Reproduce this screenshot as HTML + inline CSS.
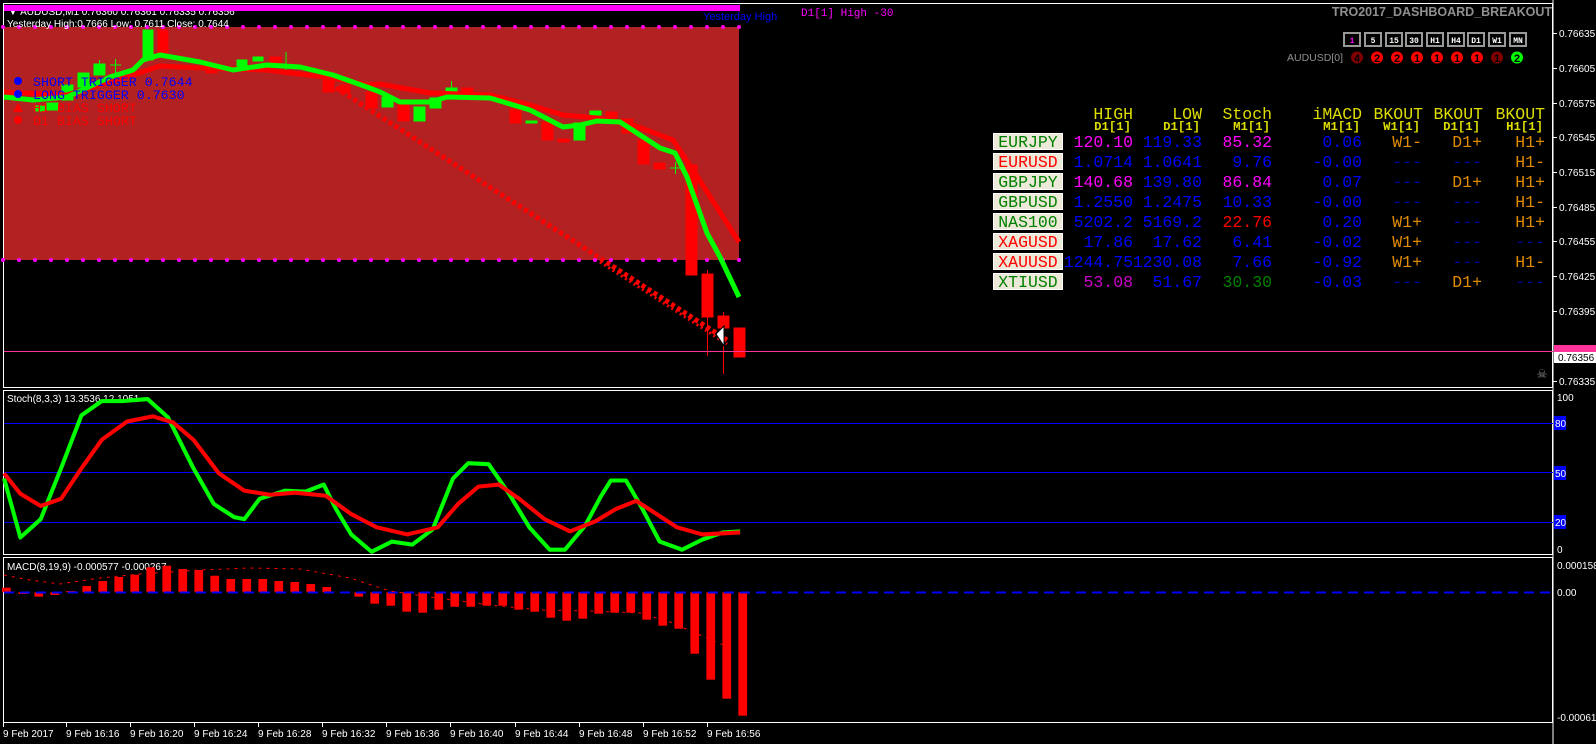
<!DOCTYPE html>
<html><head><meta charset="utf-8"><style>
html,body{margin:0;padding:0;background:#000;width:1596px;height:744px;overflow:hidden}
svg{display:block}
.ax{font:10px "Liberation Sans",sans-serif;fill:#fff}
.mono{font-family:"Liberation Mono",monospace}
</style></head><body>
<svg width="1596" height="744" viewBox="0 0 1596 744" xmlns="http://www.w3.org/2000/svg">
<rect width="1596" height="744" fill="#000"/>
<rect x="3.5" y="3.5" width="1549" height="384" fill="none" stroke="#fff"/>
<rect x="3.5" y="390.5" width="1549" height="164" fill="none" stroke="#fff"/>
<rect x="3.5" y="557.5" width="1549" height="165" fill="none" stroke="#fff"/>
<line x1="1553" y1="0" x2="1553" y2="744" stroke="#fff"/>

<rect x="4" y="27" width="735" height="233" fill="#b22222"/>
<g fill="#ff00ff">
<circle cx="3" cy="27" r="2"/><circle cx="19" cy="27" r="2"/><circle cx="35" cy="27" r="2"/><circle cx="51" cy="27" r="2"/><circle cx="67" cy="27" r="2"/><circle cx="83" cy="27" r="2"/><circle cx="99" cy="27" r="2"/><circle cx="115" cy="27" r="2"/><circle cx="131" cy="27" r="2"/><circle cx="147" cy="27" r="2"/><circle cx="163" cy="27" r="2"/><circle cx="179" cy="27" r="2"/><circle cx="195" cy="27" r="2"/><circle cx="211" cy="27" r="2"/><circle cx="227" cy="27" r="2"/><circle cx="243" cy="27" r="2"/><circle cx="259" cy="27" r="2"/><circle cx="275" cy="27" r="2"/><circle cx="291" cy="27" r="2"/><circle cx="307" cy="27" r="2"/><circle cx="323" cy="27" r="2"/><circle cx="339" cy="27" r="2"/><circle cx="355" cy="27" r="2"/><circle cx="371" cy="27" r="2"/><circle cx="387" cy="27" r="2"/><circle cx="403" cy="27" r="2"/><circle cx="419" cy="27" r="2"/><circle cx="435" cy="27" r="2"/><circle cx="451" cy="27" r="2"/><circle cx="467" cy="27" r="2"/><circle cx="483" cy="27" r="2"/><circle cx="499" cy="27" r="2"/><circle cx="515" cy="27" r="2"/><circle cx="531" cy="27" r="2"/><circle cx="547" cy="27" r="2"/><circle cx="563" cy="27" r="2"/><circle cx="579" cy="27" r="2"/><circle cx="595" cy="27" r="2"/><circle cx="611" cy="27" r="2"/><circle cx="627" cy="27" r="2"/><circle cx="643" cy="27" r="2"/><circle cx="659" cy="27" r="2"/><circle cx="675" cy="27" r="2"/><circle cx="691" cy="27" r="2"/><circle cx="707" cy="27" r="2"/><circle cx="723" cy="27" r="2"/><circle cx="739" cy="27" r="2"/>
<circle cx="3" cy="260" r="2"/><circle cx="19" cy="260" r="2"/><circle cx="35" cy="260" r="2"/><circle cx="51" cy="260" r="2"/><circle cx="67" cy="260" r="2"/><circle cx="83" cy="260" r="2"/><circle cx="99" cy="260" r="2"/><circle cx="115" cy="260" r="2"/><circle cx="131" cy="260" r="2"/><circle cx="147" cy="260" r="2"/><circle cx="163" cy="260" r="2"/><circle cx="179" cy="260" r="2"/><circle cx="195" cy="260" r="2"/><circle cx="211" cy="260" r="2"/><circle cx="227" cy="260" r="2"/><circle cx="243" cy="260" r="2"/><circle cx="259" cy="260" r="2"/><circle cx="275" cy="260" r="2"/><circle cx="291" cy="260" r="2"/><circle cx="307" cy="260" r="2"/><circle cx="323" cy="260" r="2"/><circle cx="339" cy="260" r="2"/><circle cx="355" cy="260" r="2"/><circle cx="371" cy="260" r="2"/><circle cx="387" cy="260" r="2"/><circle cx="403" cy="260" r="2"/><circle cx="419" cy="260" r="2"/><circle cx="435" cy="260" r="2"/><circle cx="451" cy="260" r="2"/><circle cx="467" cy="260" r="2"/><circle cx="483" cy="260" r="2"/><circle cx="499" cy="260" r="2"/><circle cx="515" cy="260" r="2"/><circle cx="531" cy="260" r="2"/><circle cx="547" cy="260" r="2"/><circle cx="563" cy="260" r="2"/><circle cx="579" cy="260" r="2"/><circle cx="595" cy="260" r="2"/><circle cx="611" cy="260" r="2"/><circle cx="627" cy="260" r="2"/><circle cx="643" cy="260" r="2"/><circle cx="659" cy="260" r="2"/><circle cx="675" cy="260" r="2"/><circle cx="691" cy="260" r="2"/><circle cx="707" cy="260" r="2"/><circle cx="723" cy="260" r="2"/><circle cx="739" cy="260" r="2"/>
</g>

<line x1="330" y1="84" x2="727" y2="340" stroke="#ff0000" stroke-width="5" stroke-dasharray="4 3"/>
<line x1="600" y1="262" x2="727" y2="344" stroke="#ff0000" stroke-width="3" stroke-dasharray="2 3"/>

<g fill="#ff0000" stroke="#ff0000">
<rect x="158" y="30" width="10" height="25"/>
<rect x="206" y="65" width="11" height="8"/>
<rect x="270" y="57" width="11" height="6"/>
<rect x="323" y="80" width="11" height="12"/>
<rect x="340" y="85" width="10" height="8"/>
<rect x="366" y="92" width="11" height="16"/>
<rect x="398" y="105" width="11" height="16"/>
<rect x="462" y="88" width="11" height="7"/>
<rect x="510" y="109" width="11" height="14"/>
<rect x="542" y="122" width="11" height="18"/>
<rect x="558" y="139" width="11" height="3"/>
<rect x="606" y="112" width="11" height="6"/>
<rect x="622" y="119" width="11" height="14"/>
<rect x="638" y="140" width="11" height="24"/>
<rect x="654" y="163" width="11" height="6"/>
<rect x="686" y="165" width="11" height="110"/>
<rect x="702" y="274" width="11" height="43"/><line x1="707.5" y1="270" x2="707.5" y2="356"/>
<rect x="718" y="316" width="11" height="12"/><line x1="723.5" y1="312" x2="723.5" y2="374"/>
<rect x="734" y="328" width="11" height="29"/>
</g>
<g fill="#00ff00" stroke="#00ff00">
<rect x="143" y="30" width="10" height="30"/>
<rect x="94" y="64" width="11" height="11"/><line x1="99.5" y1="60" x2="99.5" y2="64"/>
<rect x="78" y="73" width="11" height="14"/>
<rect x="62" y="85" width="11" height="15"/>
<rect x="47" y="103" width="11" height="7"/>
<rect x="35" y="106" width="10" height="5"/>
<line x1="110" y1="65" x2="121" y2="65"/><line x1="115.5" y1="59" x2="115.5" y2="73"/>
<rect x="237" y="60" width="10" height="8"/>
<rect x="253" y="57" width="10" height="4"/>
<line x1="286" y1="52" x2="286" y2="70"/>
<rect x="382" y="97" width="11" height="10"/>
<rect x="414" y="107" width="11" height="14"/>
<rect x="430" y="98" width="11" height="10"/>
<rect x="446" y="88" width="11" height="3"/><line x1="451.5" y1="81" x2="451.5" y2="88"/>
<rect x="526" y="121" width="11" height="2"/>
<rect x="574" y="123" width="11" height="17"/>
<rect x="590" y="111" width="11" height="4"/>
<line x1="670" y1="168" x2="681" y2="168"/><line x1="675.5" y1="162" x2="675.5" y2="174"/>
</g>

<polyline fill="none" stroke="#ff0000" stroke-width="5" stroke-linejoin="round" points="4,92 67,95 133,75 160,66 200,68 267,70 333,78 367,85 380,84 430,93 490,95 530,105 563,115 597,118 633,125 673,140 693,170 739,242"/>
<polyline fill="none" stroke="#00ff00" stroke-width="5" stroke-linejoin="round" points="4,97 33,100 67,97 110,77 133,70 143,60 160,55 200,62 233,70 267,65 300,67 333,75 367,87 380,92 400,102 430,102 447,97 490,98 530,110 563,127 580,125 597,121 620,122 640,135 660,148 675,153 687,177 707,233 720,257 739,297"/>

<path d="M716 334 L724 326 L724 346 Z" fill="#fff" stroke="#000" stroke-width="1"/>

<text x="8" y="15" class="ax" font-size="10.5">▼  AUDUSD,M1  0.76360 0.76361 0.76335 0.76356</text>
<rect x="4" y="5" width="736" height="6" fill="#ff00ff"/>
<text x="7" y="27" class="ax" font-size="10.5">Yesterday High:0.7666    Low: 0.7611    Close: 0.7644</text>
<text x="703" y="20" font-family="Liberation Sans,sans-serif" font-size="11" fill="#0000ff">Yesterday High</text>
<text x="801" y="16" class="mono" font-size="11" fill="#ff00ff">D1[1] High  -30</text>
<text x="1552" y="16" text-anchor="end" font-family="Liberation Sans,sans-serif" font-size="12.5" font-weight="bold" fill="#909090">TRO2017_DASHBOARD_BREAKOUT</text>

<g class="mono" font-size="13.3">
<circle cx="18" cy="81" r="4" fill="#0000ff"/><text x="33" y="86" fill="#0000ff">SHORT TRIGGER 0.7644</text>
<circle cx="18" cy="94" r="4" fill="#0000ff"/><text x="33" y="99" fill="#0000ff">LONG TRIGGER  0.7630</text>
<path d="M13 112 L18 103 L23 112Z" fill="#ff0000"/><text x="33" y="112" fill="#ff0000">H1 BIAS SHORT</text>
<circle cx="18" cy="120" r="4" fill="#ff0000"/><text x="33" y="125" fill="#ff0000">D1 BIAS SHORT</text>
</g>

<line x1="4" y1="351.5" x2="1553" y2="351.5" stroke="#ff3399"/>
<rect x="1554" y="345" width="42" height="7" fill="#ff3399"/>
<rect x="1554" y="352" width="42" height="11" fill="#fff"/>
<text x="1558" y="361" class="ax" style="fill:#000">0.76356</text>
<text x="1542" y="378" text-anchor="middle" font-size="12" fill="#888">☠</text>

<g class="ax">
<text x="1559" y="37">0.76635</text><text x="1559" y="72">0.76605</text><text x="1559" y="107">0.76575</text><text x="1559" y="141">0.76545</text><text x="1559" y="176">0.76515</text><text x="1559" y="211">0.76485</text><text x="1559" y="245">0.76455</text><text x="1559" y="280">0.76425</text><text x="1559" y="315">0.76395</text><text x="1559" y="385">0.76335</text>
</g>
<g stroke="#fff"><line x1="1553" y1="33.5" x2="1557" y2="33.5"/><line x1="1553" y1="68.5" x2="1557" y2="68.5"/><line x1="1553" y1="103.5" x2="1557" y2="103.5"/><line x1="1553" y1="137.5" x2="1557" y2="137.5"/><line x1="1553" y1="172.5" x2="1557" y2="172.5"/><line x1="1553" y1="207.5" x2="1557" y2="207.5"/><line x1="1553" y1="241.5" x2="1557" y2="241.5"/><line x1="1553" y1="276.5" x2="1557" y2="276.5"/><line x1="1553" y1="311.5" x2="1557" y2="311.5"/><line x1="1553" y1="381.5" x2="1557" y2="381.5"/></g>

<g font-family="Liberation Mono,monospace" font-size="8" font-weight="bold" text-anchor="middle">
<g fill="#000" stroke="#999" stroke-width="2">
<rect x="1344" y="33" width="16" height="13"/><rect x="1365" y="33" width="16" height="13"/><rect x="1386" y="33" width="16" height="13"/><rect x="1406" y="33" width="16" height="13"/><rect x="1427" y="33" width="16" height="13"/><rect x="1448" y="33" width="16" height="13"/><rect x="1468" y="33" width="16" height="13"/><rect x="1489" y="33" width="16" height="13"/><rect x="1510" y="33" width="16" height="13"/>
</g>
<text x="1352" y="43" fill="#ff00ff">1</text><text x="1373" y="43" fill="#fff">5</text><text x="1394" y="43" fill="#fff">15</text><text x="1414" y="43" fill="#fff">30</text><text x="1435" y="43" fill="#fff">H1</text><text x="1456" y="43" fill="#fff">H4</text><text x="1476" y="43" fill="#fff">D1</text><text x="1497" y="43" fill="#fff">W1</text><text x="1518" y="43" fill="#fff">MN</text>
</g>
<text x="1343" y="61" text-anchor="end" font-family="Liberation Sans,sans-serif" font-size="10.5" fill="#909090">AUDUSD[0]</text>
<g font-family="Liberation Sans,sans-serif" font-size="11" font-weight="bold" text-anchor="middle">
<circle cx="1357" cy="57.5" r="6" fill="#800000"/><text x="1357" y="62" fill="#000">4</text>
<circle cx="1377" cy="57.5" r="6" fill="#ff0000"/><text x="1377" y="62" fill="#000">2</text>
<circle cx="1397" cy="57.5" r="6" fill="#ff0000"/><text x="1397" y="62" fill="#000">2</text>
<circle cx="1417" cy="57.5" r="6" fill="#ff0000"/><text x="1417" y="62" fill="#000">1</text>
<circle cx="1437" cy="57.5" r="6" fill="#ff0000"/><text x="1437" y="62" fill="#000">1</text>
<circle cx="1457" cy="57.5" r="6" fill="#ff0000"/><text x="1457" y="62" fill="#000">1</text>
<circle cx="1477" cy="57.5" r="6" fill="#ff0000"/><text x="1477" y="62" fill="#000">1</text>
<circle cx="1497" cy="57.5" r="6" fill="#800000"/><text x="1497" y="62" fill="#000">1</text>
<circle cx="1517" cy="57.5" r="6" fill="#00ff00"/><text x="1517" y="62" fill="#000">2</text>
</g>

<!-- dashboard -->
<g font-family="Liberation Mono,monospace" text-anchor="end">
<g font-size="16.5" fill="#dede00">
<text x="1133" y="119">HIGH</text><text x="1202" y="119">LOW</text><text x="1272" y="119">Stoch</text><text x="1362" y="119">iMACD</text><text x="1423" y="119">BKOUT</text><text x="1483" y="119">BKOUT</text><text x="1545" y="119">BKOUT</text>
</g>
<g font-size="12.3" fill="#dede00" font-weight="bold">
<text x="1131" y="130">D1[1]</text><text x="1200" y="130">D1[1]</text><text x="1270" y="130">M1[1]</text><text x="1360" y="130">M1[1]</text><text x="1420" y="130">W1[1]</text><text x="1480" y="130">D1[1]</text><text x="1543" y="130">H1[1]</text>
</g>
<g fill="#ece9d8" stroke="#fff" stroke-width="1">
<rect x="993.5" y="133.5" width="69" height="16"/><rect x="993.5" y="153.5" width="69" height="16"/><rect x="993.5" y="173.5" width="69" height="16"/><rect x="993.5" y="193.5" width="69" height="16"/><rect x="993.5" y="213.5" width="69" height="16"/><rect x="993.5" y="233.5" width="69" height="16"/><rect x="993.5" y="253.5" width="69" height="16"/><rect x="993.5" y="273.5" width="69" height="16"/>
</g>
<g font-size="16.5" text-anchor="middle">
<text x="1028" y="147" fill="#008000">EURJPY</text><text x="1028" y="167" fill="#ff0000">EURUSD</text><text x="1028" y="187" fill="#008000">GBPJPY</text><text x="1028" y="207" fill="#008000">GBPUSD</text><text x="1028" y="227" fill="#008000">NAS100</text><text x="1028" y="247" fill="#ff0000">XAGUSD</text><text x="1028" y="267" fill="#ff0000">XAUUSD</text><text x="1028" y="287" fill="#008000">XTIUSD</text>
</g>
<g font-size="16.5">
<text x="1133" y="147" fill="#ff00ff">120.10</text><text x="1202" y="147" fill="#0000ff">119.33</text><text x="1272" y="147" fill="#ff00ff">85.32</text><text x="1362" y="147" fill="#0000ff">0.06</text><text x="1422" y="147" fill="#e08a00">W1-</text><text x="1482" y="147" fill="#e08a00">D1+</text><text x="1545" y="147" fill="#e08a00">H1+</text>
<text x="1133" y="167" fill="#0000ff">1.0714</text><text x="1202" y="167" fill="#0000ff">1.0641</text><text x="1272" y="167" fill="#0000ff">9.76</text><text x="1362" y="167" fill="#0000ff">-0.00</text><text x="1422" y="167" fill="#0000a0">---</text><text x="1482" y="167" fill="#0000a0">---</text><text x="1545" y="167" fill="#e08a00">H1-</text>
<text x="1133" y="187" fill="#ff00ff">140.68</text><text x="1202" y="187" fill="#0000ff">139.80</text><text x="1272" y="187" fill="#ff00ff">86.84</text><text x="1362" y="187" fill="#0000ff">0.07</text><text x="1422" y="187" fill="#0000a0">---</text><text x="1482" y="187" fill="#e08a00">D1+</text><text x="1545" y="187" fill="#e08a00">H1+</text>
<text x="1133" y="207" fill="#0000ff">1.2550</text><text x="1202" y="207" fill="#0000ff">1.2475</text><text x="1272" y="207" fill="#0000ff">10.33</text><text x="1362" y="207" fill="#0000ff">-0.00</text><text x="1422" y="207" fill="#0000a0">---</text><text x="1482" y="207" fill="#0000a0">---</text><text x="1545" y="207" fill="#e08a00">H1-</text>
<text x="1133" y="227" fill="#0000ff">5202.2</text><text x="1202" y="227" fill="#0000ff">5169.2</text><text x="1272" y="227" fill="#ff0000">22.76</text><text x="1362" y="227" fill="#0000ff">0.20</text><text x="1422" y="227" fill="#e08a00">W1+</text><text x="1482" y="227" fill="#0000a0">---</text><text x="1545" y="227" fill="#e08a00">H1+</text>
<text x="1133" y="247" fill="#0000ff">17.86</text><text x="1202" y="247" fill="#0000ff">17.62</text><text x="1272" y="247" fill="#0000ff">6.41</text><text x="1362" y="247" fill="#0000ff">-0.02</text><text x="1422" y="247" fill="#e08a00">W1+</text><text x="1482" y="247" fill="#0000a0">---</text><text x="1545" y="247" fill="#0000a0">---</text>
<text x="1133" y="267" fill="#0000ff">1244.75</text><text x="1202" y="267" fill="#0000ff">1230.08</text><text x="1272" y="267" fill="#0000ff">7.66</text><text x="1362" y="267" fill="#0000ff">-0.92</text><text x="1422" y="267" fill="#e08a00">W1+</text><text x="1482" y="267" fill="#0000a0">---</text><text x="1545" y="267" fill="#e08a00">H1-</text>
<text x="1133" y="287" fill="#cc00cc">53.08</text><text x="1202" y="287" fill="#0000ff">51.67</text><text x="1272" y="287" fill="#008000">30.30</text><text x="1362" y="287" fill="#0000ff">-0.03</text><text x="1422" y="287" fill="#0000a0">---</text><text x="1482" y="287" fill="#e08a00">D1+</text><text x="1545" y="287" fill="#0000a0">---</text>
</g>
</g>

<text x="7" y="402" class="ax" font-size="10.5">Stoch(8,3,3) 13.3536 12.1051</text>
<g stroke="#0000ff"><line x1="4" y1="423.5" x2="1553" y2="423.5"/><line x1="4" y1="472.5" x2="1553" y2="472.5"/><line x1="4" y1="522.5" x2="1553" y2="522.5"/></g>
<g fill="#0000ff"><rect x="1554" y="416" width="12" height="14"/><rect x="1554" y="466" width="12" height="14"/><rect x="1554" y="515" width="12" height="14"/></g>
<g class="ax"><text x="1555" y="427">80</text><text x="1555" y="477">50</text><text x="1555" y="526">20</text><text x="1557" y="401">100</text><text x="1557" y="553">0</text></g>
<g transform="scale(1.018)">
<polyline fill="none" stroke="#00ff00" stroke-width="4" stroke-linejoin="round" points="4,470 20,528 40,510 60,460 80,408 100,394 120,394 145,392 165,410 190,460 210,495 230,508 240,510 255,490 280,482 300,483 318,476 330,500 345,525 365,542 385,532 405,535 425,520 445,470 460,455 480,456 500,485 520,518 540,540 555,540 575,516 590,488 600,472 615,472 630,498 648,532 670,540 690,530 710,523 727,522"/>
<polyline fill="none" stroke="#ff0000" stroke-width="4" stroke-linejoin="round" points="4,465 20,485 40,497 60,490 80,460 100,432 125,414 150,409 170,415 190,432 215,465 240,482 265,486 290,484 320,487 345,505 370,518 400,525 430,518 450,495 470,478 490,476 510,490 535,510 560,522 585,512 605,500 625,492 645,505 665,518 690,525 727,523"/>
</g>

<text x="7" y="570" class="ax" font-size="10.5">MACD(8,19,9) -0.000577 -0.000267</text>
<g class="ax"><text x="1557" y="569">0.000158</text><text x="1557" y="596">0.00</text><text x="1557" y="721">-0.000611</text></g>
<g fill="#ff0000">
<rect x="2" y="587.7" width="8.7" height="4.6"/>
<rect x="18.4" y="592.3" width="8.7" height="1.7"/>
<rect x="34.4" y="592.3" width="8.7" height="4.4"/>
<rect x="50.4" y="592.3" width="8.7" height="2.7"/>
<rect x="66.4" y="591" width="8.7" height="1.3"/>
<rect x="82.4" y="586" width="8.7" height="6.3"/>
<rect x="98.4" y="581" width="8.7" height="11.3"/>
<rect x="114.4" y="577" width="8.7" height="15.3"/>
<rect x="130.4" y="574.7" width="8.7" height="17.6"/>
<rect x="146.4" y="567.3" width="8.7" height="25"/>
<rect x="162.4" y="565.7" width="8.7" height="26.6"/>
<rect x="178.4" y="569" width="8.7" height="23.3"/>
<rect x="194.4" y="570" width="8.7" height="22.3"/>
<rect x="210.4" y="575.7" width="8.7" height="16.6"/>
<rect x="226.4" y="579" width="8.7" height="13.3"/>
<rect x="242.4" y="579" width="8.7" height="13.3"/>
<rect x="258.4" y="579" width="8.7" height="13.3"/>
<rect x="274.4" y="581" width="8.7" height="11.3"/>
<rect x="290.4" y="582" width="8.7" height="10.3"/>
<rect x="306.4" y="584" width="8.7" height="8.3"/>
<rect x="322.4" y="587" width="8.7" height="5.3"/>
<rect x="354.4" y="592.3" width="8.7" height="4.4"/>
<rect x="370.4" y="592.3" width="8.7" height="11.4"/>
<rect x="386.4" y="592.3" width="8.7" height="13.4"/>
<rect x="402.4" y="592.3" width="8.7" height="19.4"/>
<rect x="418.4" y="592.3" width="8.7" height="20.4"/>
<rect x="434.4" y="592.3" width="8.7" height="17.4"/>
<rect x="450.4" y="592.3" width="8.7" height="14.4"/>
<rect x="466.4" y="592.3" width="8.7" height="14.4"/>
<rect x="482.4" y="592.3" width="8.7" height="13.4"/>
<rect x="498.4" y="592.3" width="8.7" height="13.4"/>
<rect x="514.4" y="592.3" width="8.7" height="17.4"/>
<rect x="530.4" y="592.3" width="8.7" height="19.4"/>
<rect x="546.4" y="592.3" width="8.7" height="25.4"/>
<rect x="562.4" y="592.3" width="8.7" height="28.4"/>
<rect x="578.4" y="592.3" width="8.7" height="26.4"/>
<rect x="594.4" y="592.3" width="8.7" height="21.4"/>
<rect x="610.4" y="592.3" width="8.7" height="20.4"/>
<rect x="626.4" y="592.3" width="8.7" height="20.4"/>
<rect x="642.4" y="592.3" width="8.7" height="27.4"/>
<rect x="658.4" y="592.3" width="8.7" height="33.4"/>
<rect x="674.4" y="592.3" width="8.7" height="36.4"/>
<rect x="690.4" y="592.3" width="8.7" height="61.4"/>
<rect x="706.4" y="592.3" width="8.7" height="87.4"/>
<rect x="722.4" y="592.3" width="8.7" height="106.4"/>
<rect x="738.4" y="592.3" width="8.7" height="123.4"/>
</g>
<line x1="4" y1="592.5" x2="1553" y2="592.5" stroke="#0000ff" stroke-width="2" stroke-dasharray="10 6"/>
<polyline fill="none" stroke="#ff0000" stroke-width="1" stroke-dasharray="3 5" points="4,575 30,580 60,584 100,578 140,574 200,570 250,568 300,569 350,578 390,591 430,597 490,605 540,610 590,611 640,613 670,622 700,635 735,650"/>

<g stroke="#fff"><line x1="3.5" y1="723" x2="3.5" y2="727"/><line x1="66.5" y1="723" x2="66.5" y2="727"/><line x1="130.5" y1="723" x2="130.5" y2="727"/><line x1="194.5" y1="723" x2="194.5" y2="727"/><line x1="258.5" y1="723" x2="258.5" y2="727"/><line x1="322.5" y1="723" x2="322.5" y2="727"/><line x1="386.5" y1="723" x2="386.5" y2="727"/><line x1="450.5" y1="723" x2="450.5" y2="727"/><line x1="515.5" y1="723" x2="515.5" y2="727"/><line x1="579.5" y1="723" x2="579.5" y2="727"/><line x1="643.5" y1="723" x2="643.5" y2="727"/><line x1="707.5" y1="723" x2="707.5" y2="727"/></g>
<g class="ax" font-size="10.5">
<text x="3" y="737">9 Feb 2017</text><text x="66" y="737">9 Feb 16:16</text><text x="130" y="737">9 Feb 16:20</text><text x="194" y="737">9 Feb 16:24</text><text x="258" y="737">9 Feb 16:28</text><text x="322" y="737">9 Feb 16:32</text><text x="386" y="737">9 Feb 16:36</text><text x="450" y="737">9 Feb 16:40</text><text x="515" y="737">9 Feb 16:44</text><text x="579" y="737">9 Feb 16:48</text><text x="643" y="737">9 Feb 16:52</text><text x="707" y="737">9 Feb 16:56</text>
</g>
</svg>
</body></html>
